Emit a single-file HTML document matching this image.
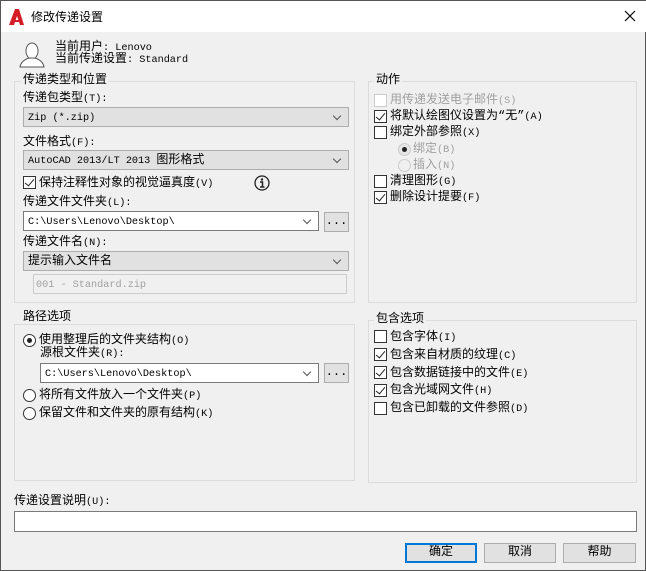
<!DOCTYPE html>
<html><head><meta charset="utf-8"><style>
*{margin:0;padding:0;box-sizing:border-box}
body{width:646px;height:571px;background:#f0f0f0;font-family:"Liberation Mono","Noto Sans CJK SC",monospace;font-size:12px;color:#000;position:relative;overflow:hidden;border:1px solid #555}
.l{font-size:10.2px}
.a{position:absolute;white-space:nowrap;line-height:14px}
.title{position:absolute;left:0;top:0;width:646px;height:31px;background:#fff}
.grp{position:absolute;border:1px solid #dcdcdc}
.lbl{position:absolute;background:#f0f0f0;padding:0 2px;line-height:14px}
.combo{position:absolute;height:20px;border:1px solid #adadad;background:#e1e1e1;line-height:18px;padding-left:4px;white-space:nowrap}
.combo.w{background:#fff;border-color:#7a7a7a}
.combo:after{content:"";position:absolute;right:8px;top:5px;width:5px;height:5px;border-right:1px solid #555;border-bottom:1px solid #555;transform:rotate(45deg)}
.btn{position:absolute;height:20px;border:1px solid #adadad;background:#e1e1e1;text-align:center;line-height:17px}
.cb{position:absolute;width:13px;height:13px;border:1px solid #333;background:#fff}
.cb.c:after{content:"";position:absolute;left:3px;top:0px;width:4px;height:8px;border-right:1.5px solid #222;border-bottom:1.5px solid #222;transform:rotate(40deg)}
.rb{position:absolute;width:13px;height:13px;border:1px solid #333;border-radius:50%;background:#fff}
.rb.c:after{content:"";position:absolute;left:3px;top:3px;width:5px;height:5px;border-radius:50%;background:#222}
.dis{color:#a0a0a0}
</style></head><body>
<div class="title"></div>
<svg class="a" style="left:8px;top:8px" width="15" height="16" viewBox="0 0 15 16"><path d="M0 16 L6 0 L10 0 L15 16 L11 16 L8 7 L5 16Z" fill="#d41e27"/><path d="M5 12 L10 12" stroke="#d41e27" stroke-width="2"/></svg>
<div class="a" style="left:30px;top:9px;font-family:'Liberation Sans','Noto Sans CJK SC',sans-serif">修改传递设置</div>
<svg class="a" style="left:623px;top:9px" width="12" height="12"><path d="M1 1L11 11M11 1L1 11" stroke="#000" stroke-width="1.2"/></svg>
<svg class="a" style="left:18px;top:40px" width="26" height="27" viewBox="0 0 26 27"><ellipse cx="13" cy="10" rx="6" ry="8" fill="#fff" stroke="#555"/><path d="M1 26 C2 20 7 18 10 17 L16 17 C19 18 24 20 25 26Z" fill="#fff" stroke="#555"/></svg>
<div class="a" style="left:54px;top:39px">当前用户<span class="l">: Lenovo</span></div>
<div class="a" style="left:54px;top:51px">当前传递设置<span class="l">: Standard</span></div>

<div class="grp" style="left:13px;top:80px;width:341px;height:222px"></div>
<div class="lbl" style="left:20px;top:72px">传递类型和位置</div>
<div class="a" style="left:22px;top:90px">传递包类型<span class="l">(T):</span></div>
<div class="combo" style="left:22px;top:106px;width:326px"><span class="l">Zip (*.zip)</span></div>
<div class="a" style="left:22px;top:134px">文件格式<span class="l">(F):</span></div>
<div class="combo" style="left:22px;top:149px;width:326px"><span class="l">AutoCAD 2013/LT 2013 </span>图形格式</div>
<div class="cb c" style="left:22px;top:175px"></div>
<div class="a" style="left:38px;top:175px">保持注释性对象的视觉逼真度<span class="l">(V)</span></div>
<svg class="a" style="left:253px;top:174px" width="16" height="16"><circle cx="8" cy="8" r="7" fill="none" stroke="#222" stroke-width="1.3"/><circle cx="8" cy="4.5" r="1.2" fill="#222"/><path d="M6 7H8.5V12M6 12H10.5" stroke="#222" stroke-width="1.5" fill="none"/></svg>
<div class="a" style="left:22px;top:194px">传递文件文件夹<span class="l">(L):</span></div>
<div class="combo w" style="left:22px;top:210px;width:296px"><span class="l">C:\Users\Lenovo\Desktop\</span></div>
<div class="btn" style="left:323px;top:211px;width:25px">...</div>
<div class="a" style="left:22px;top:234px">传递文件名<span class="l">(N):</span></div>
<div class="combo" style="left:22px;top:250px;width:326px">提示输入文件名</div>
<div class="a dis" style="left:32px;top:273px;width:314px;height:20px;border:1px solid #ccc;line-height:18px;padding-left:2px"><span class="l">001 - Standard.zip</span></div>

<div class="grp" style="left:13px;top:323px;width:341px;height:157px"></div>
<div class="lbl" style="left:20px;top:309px">路径选项</div>
<div class="rb c" style="left:22px;top:333px"></div>
<div class="a" style="left:38px;top:332px">使用整理后的文件夹结构<span class="l">(O)</span></div>
<div class="a" style="left:39px;top:345px">源根文件夹<span class="l">(R):</span></div>
<div class="combo w" style="left:39px;top:362px;width:279px"><span class="l">C:\Users\Lenovo\Desktop\</span></div>
<div class="btn" style="left:323px;top:362px;width:25px">...</div>
<div class="rb" style="left:22px;top:388px"></div>
<div class="a" style="left:38px;top:387px">将所有文件放入一个文件夹<span class="l">(P)</span></div>
<div class="rb" style="left:22px;top:406px"></div>
<div class="a" style="left:38px;top:405px">保留文件和文件夹的原有结构<span class="l">(K)</span></div>

<div class="grp" style="left:367px;top:80px;width:269px;height:222px"></div>
<div class="lbl" style="left:373px;top:72px">动作</div>
<div class="cb" style="left:373px;top:93px;border-color:#ccc"></div><div class="a dis" style="left:389px;top:92px">用传递发送电子邮件<span class="l">(S)</span></div>
<div class="cb c" style="left:373px;top:109px"></div><div class="a" style="left:389px;top:108px">将默认绘图仪设置为“无”<span class="l">(A)</span></div>
<div class="cb" style="left:373px;top:125px"></div><div class="a" style="left:389px;top:124px">绑定外部参照<span class="l">(X)</span></div>
<div class="rb c" style="left:397px;top:142px;border-color:#ccc;background:#e6e6e6"></div><div class="a dis" style="left:412px;top:141px">绑定<span class="l">(B)</span></div>
<div class="rb" style="left:397px;top:158px;border-color:#ccc;background:#f0f0f0"></div><div class="a dis" style="left:412px;top:157px">插入<span class="l">(N)</span></div>
<div class="cb" style="left:373px;top:174px"></div><div class="a" style="left:389px;top:173px">清理图形<span class="l">(G)</span></div>
<div class="cb c" style="left:373px;top:190px"></div><div class="a" style="left:389px;top:189px">删除设计提要<span class="l">(F)</span></div>

<div class="grp" style="left:367px;top:319px;width:269px;height:163px"></div>
<div class="lbl" style="left:373px;top:311px">包含选项</div>
<div class="cb" style="left:373px;top:329px"></div><div class="a" style="left:389px;top:329px">包含字体<span class="l">(I)</span></div>
<div class="cb c" style="left:373px;top:347px"></div><div class="a" style="left:389px;top:347px">包含来自材质的纹理<span class="l">(C)</span></div>
<div class="cb c" style="left:373px;top:365px"></div><div class="a" style="left:389px;top:365px">包含数据链接中的文件<span class="l">(E)</span></div>
<div class="cb c" style="left:373px;top:383px"></div><div class="a" style="left:389px;top:382px">包含光域网文件<span class="l">(H)</span></div>
<div class="cb" style="left:373px;top:401px"></div><div class="a" style="left:389px;top:400px">包含已卸载的文件参照<span class="l">(D)</span></div>

<div class="a" style="left:13px;top:493px">传递设置说明<span class="l">(U):</span></div>
<div class="a" style="left:13px;top:510px;width:623px;height:21px;border:1px solid #7a7a7a;background:#fff"></div>
<div class="btn" style="left:404px;top:542px;width:72px;border:2px solid #0078d7;line-height:15px">确定</div>
<div class="btn" style="left:483px;top:542px;width:72px">取消</div>
<div class="btn" style="left:562px;top:542px;width:73px">帮助</div>
</body></html>
